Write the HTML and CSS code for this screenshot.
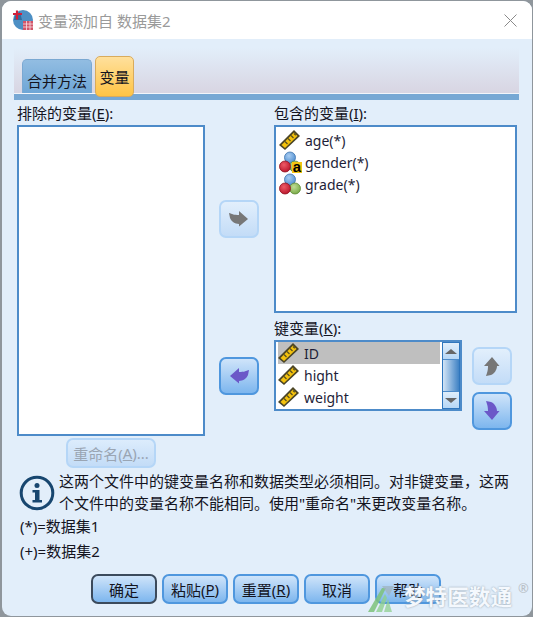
FILE: index.html
```html
<!DOCTYPE html>
<html lang="zh-CN">
<head>
<meta charset="utf-8">
<title>变量添加自 数据集2</title>
<link rel="stylesheet" href="styles.css">
</head>
<body>
<svg class="defs" width="0" height="0" aria-hidden="true">
  <defs>
    <radialGradient id="gb" cx=".4" cy=".35" r=".7"><stop offset="0" stop-color="#a9cdf2"/><stop offset="1" stop-color="#4f8ed0"/></radialGradient>
    <radialGradient id="gr" cx=".4" cy=".35" r=".7"><stop offset="0" stop-color="#ee5a66"/><stop offset="1" stop-color="#b8142a"/></radialGradient>
    <radialGradient id="gg" cx=".4" cy=".35" r=".7"><stop offset="0" stop-color="#bfdc94"/><stop offset="1" stop-color="#76a844"/></radialGradient>
  </defs>
  <symbol id="ruler" viewBox="0 0 22 20">
    <path d="M0 15 15 0l6 6L6 20z" fill="#4a4426"/>
    <path d="M2.500 15 15 2.500 18.500 6 6 18z" fill="#f4c20d"/>
    <path d="M6 11.500l2.500 2.500M9 8.500l2.500 2.500M12 5.500l2.500 2.500M15 3.500l1.800 1.800" stroke="#5c5220" stroke-width="1.300"/>
  </symbol>
  <symbol id="balls" viewBox="0 0 22 22">
    <circle cx="11" cy="6.500" r="5.500" fill="url(#gb)" stroke="#3f74ad" stroke-width=".8"/>
    <circle cx="16" cy="15.500" r="5.500" fill="url(#gg)" stroke="#5f8a38" stroke-width=".8"/>
    <circle cx="6" cy="15.500" r="5.500" fill="url(#gr)" stroke="#8f1422" stroke-width=".8"/>
  </symbol>
  <symbol id="arrow" viewBox="0 0 20 16">
    <path d="M0 2c3 1 5 2 10 2V0l9 8-9 7.500V13C6 13 2 10 1 7z" fill="currentColor"/>
  </symbol>
</svg>
<div class="dialog">
  <header class="titlebar">
    <svg class="app-icon" viewBox="0 0 22 22" width="22" height="22" aria-hidden="true">
      <circle cx="11" cy="11" r="10" fill="#4d8fc4"/>
      <path d="M2 11a9 9 0 0 1 6-8l2 8z" fill="#2f6d9f"/>
      <path d="M5 1.500v9M1 5h9" stroke="#cf1f3a" stroke-width="2.200"/>
      <rect x="11" y="12" width="10" height="9" fill="#d25468"/>
      <path d="M11 15h10M11 18h10M14.500 12v9M18 12v9" stroke="#f6dfe3" stroke-width=".8"/>
    </svg>
    <h1 class="title">变量添加自 数据集2</h1>
    <svg class="close" viewBox="0 0 13 13" width="13" height="13" aria-hidden="true">
      <path d="M.5.500l12 12M12.500.500l-12 12" stroke="#8a8a8a" stroke-width="1"/>
    </svg>
  </header>
  <div class="content">
    <nav class="tabstrip">
      <span class="tab">合并方法</span>
      <span class="tab tab-active">变量</span>
    </nav>
    <div class="tabline"></div>
    <main class="columns">
      <section class="col-left">
        <div class="label">排除的变量(<u>E</u>):</div>
        <div class="listbox listbox-excluded"></div>
        <button class="btn btn-rename" disabled>重命名(<u>A</u>)...</button>
      </section>
      <section class="col-mid">
        <button class="btn square square-disabled arrow-top"><svg class="ico" width="20" height="16"><use href="#arrow"/></svg></button>
        <button class="btn square arrow-low"><svg class="ico ico-flip" width="20" height="16"><use href="#arrow"/></svg></button>
      </section>
      <section class="col-right">
        <div class="label">包含的变量(<u>I</u>):</div>
        <ul class="listbox listbox-included">
          <li class="item"><svg class="var-icon" width="22" height="20"><use href="#ruler"/></svg>age(*)</li>
          <li class="item"><span class="nominal"><svg class="var-icon" width="22" height="22"><use href="#balls"/></svg><b class="letter-a">a</b></span>gender(*)</li>
          <li class="item"><svg class="var-icon" width="22" height="22"><use href="#balls"/></svg>grade(*)</li>
        </ul>
        <div class="label label-key">键变量(<u>K</u>):</div>
        <div class="key-row">
          <div class="keybox">
            <ul class="keylist">
              <li class="item item-selected"><svg class="var-icon" width="22" height="20"><use href="#ruler"/></svg>ID</li>
              <li class="item"><svg class="var-icon" width="22" height="20"><use href="#ruler"/></svg>hight</li>
              <li class="item"><svg class="var-icon" width="22" height="20"><use href="#ruler"/></svg>weight</li>
            </ul>
            <div class="scrollbar">
              <span class="sb-btn"><i class="tri tri-up"></i></span>
              <span class="sb-thumb"></span>
              <span class="sb-btn"><i class="tri tri-down"></i></span>
            </div>
          </div>
          <div class="updown">
            <button class="btn square square-disabled"><svg class="ico ico-up" width="20" height="16"><use href="#arrow"/></svg></button>
            <button class="btn square"><svg class="ico ico-down" width="20" height="16"><use href="#arrow"/></svg></button>
          </div>
        </div>
      </section>
    </main>
    <section class="note">
      <svg class="info" viewBox="0 0 36 36" width="36" height="36" aria-hidden="true">
        <circle cx="18" cy="18" r="15.800" fill="none" stroke="#17466f" stroke-width="3"/>
        <circle cx="18" cy="10.500" r="2.500" fill="#17466f"/>
        <path d="M13.500 15h7v10h2.500v2.500H13.500V25H16v-7.500h-2.500z" fill="#17466f"/>
      </svg>
      <p class="note-text">这两个文件中的键变量名称和数据类型必须相同。对非键变量，这两个文件中的变量名称不能相同。使用"重命名"来更改变量名称。</p>
    </section>
    <p class="legend">(*)=数据集1</p>
    <p class="legend legend-2">(+)=数据集2</p>
    <footer class="actions">
      <button class="btn act act-default">确定</button>
      <button class="btn act">粘贴(<u>P</u>)</button>
      <button class="btn act">重置(<u>R</u>)</button>
      <button class="btn act">取消</button>
      <button class="btn act">帮助</button>
    </footer>
  </div>
  <div class="watermark">
    <svg class="wm-logo" viewBox="0 0 30 30" width="30" height="30" aria-hidden="true">
      <path d="M0 28 14 4l4 0L6 28z" fill="#7cc27a" opacity=".85"/>
      <path d="M8 28 17 10l2 4-5 14z" fill="#8fcf8f" opacity=".8"/>
      <path d="M16 28l4-13 4 13z" fill="#8fcf8f" opacity=".75"/>
      <path d="M14 2h12l-5 10z" fill="#9fb3bf" opacity=".75"/>
    </svg>
    <span class="wm-text">梦特医数通</span>
    <sup class="wm-reg">®</sup>
  </div>
</div>
</body>
</html>
```
FILE: styles.css
```css
* { box-sizing: border-box; }
html, body { margin: 0; padding: 0; }
body {
  width: 533px;
  height: 617px;
  overflow: hidden;
  background: #8f969c;
  font-family: "Noto Sans", "Noto Sans CJK SC", sans-serif;
  font-size: 15px;
  color: #14141e;
}
.defs { position: absolute; }
.dialog {
  position: relative;
  margin: 1px 0 0 2px;
  width: 530px;
  height: 615px;
  border-radius: 9px;
  overflow: hidden;
  background: #e2eefa;
}
.titlebar {
  height: 38px;
  background: #fff;
  display: flex;
  align-items: center;
  padding: 0 9px 0 10px;
}
.app-icon { flex: none; }
.title {
  margin: 0 0 0 4px;
  flex: 1;
  font-size: 15px;
  font-weight: 400;
  color: #9a9a9a;
}
.close { flex: none; margin-right: 6px; }
.content { padding: 0 0 0 15px; }
.tabstrip {
  margin: 9px 13px 0 -3px;
  padding: 8px 0 0 8px;
  height: 46px;
  display: flex;
  align-items: flex-end;
  gap: 3px;
  background: linear-gradient(#e2eefa, #d8d5e2);
  border-bottom: 1px solid #f2f5fa;
}
.tab {
  height: 34px;
  width: 70px;
  padding-top: 10px;
  text-align: center;
  background: linear-gradient(#92bde2, #6ea6d6);
  border: 1px solid #7aa8d2;
  border-bottom: 0;
  border-radius: 5px 5px 0 0;
}
.tab-active {
  width: 39px;
  height: 41px;
  margin-bottom: -4px;
  padding-top: 9px;
  background: linear-gradient(#ffe09c, #ffc445);
  border: 1px solid #d9ab5c;
  border-radius: 5px;
  position: relative;
}
.tabline {
  margin: 0 13px 0 -3px;
  height: 6px;
  background: #77a8d4;
}
.columns {
  display: grid;
  grid-template-columns: 188px 69px 243px;
  height: 368px;
}
.label { height: 25px; padding-top: 3px; line-height: 20px; white-space: nowrap; }
.listbox {
  margin: 0;
  padding: 2px 0 0 3px;
  list-style: none;
  background: #fff;
  border: 2px solid #4d8bc9;
}
.listbox-excluded { height: 311px; }
.listbox-included { height: 188px; }
.label-key { height: 27px; padding-top: 5px; margin-top: 0; }
.item {
  height: 22px;
  display: flex;
  align-items: center;
  gap: 4px;
  font-size: 14px;
  color: #1e1e38;
  white-space: nowrap;
}
.var-icon { flex: none; display: block; }
.nominal { position: relative; display: block; height: 22px; }
.letter-a {
  position: absolute;
  right: -1px;
  bottom: 0;
  width: 10px;
  height: 11px;
  background: #f3c511;
  font: 700 15px/9px "Liberation Sans", sans-serif;
  color: #000;
  text-align: center;
}
.col-mid { display: flex; flex-direction: column; padding: 100px 0 0 14px; }
.arrow-low { margin-top: 119px; }
.btn {
  font: inherit;
  color: #14141e;
  padding: 0;
  border: 2px solid #4f97de;
  border-radius: 7px;
  background: linear-gradient(#cfe4fa, #7db6ee);
  display: flex;
  align-items: center;
  justify-content: center;
}
.btn-rename {
  margin: 2px 0 0 49px;
  width: 90px;
  height: 30px;
  color: #9aa5b3;
  border-color: #b5d6f7;
  background: linear-gradient(#dcecfc, #c3dcf7);
}
.square { width: 40px; height: 38px; color: #6b58c8; }
.square-disabled {
  color: #777;
  border-color: #b5d6f7;
  background: linear-gradient(#e2effc, #c3dcf7);
}
.ico { display: block; }
.ico-flip { transform: scaleX(-1); }
.ico-up { transform: rotate(-90deg); }
.ico-down { transform: rotate(90deg) scaleY(-1); }
.key-row { display: flex; }
.keybox {
  width: 188px;
  height: 71px;
  display: flex;
  background: #fff;
  border: 2px solid #4d8bc9;
}
.keylist {
  flex: 1;
  margin: 0;
  padding: 0 2px;
  list-style: none;
}
.item-selected { background: #bfbfbf; }
.scrollbar {
  width: 18px;
  display: flex;
  flex-direction: column;
  border: 1px solid #2f76bd;
  background: #d9e9f9;
}
.sb-btn {
  height: 16px;
  display: flex;
  align-items: center;
  justify-content: center;
  background: linear-gradient(#e0eefb, #b6d7f6);
}
.sb-thumb {
  flex: 1;
  background: linear-gradient(90deg, #d2e4f6, #3f82c4);
  border-top: 1px solid #4d8bc9;
  border-bottom: 1px solid #4d8bc9;
}
.tri { width: 0; height: 0; border-left: 6px solid transparent; border-right: 6px solid transparent; }
.tri-up { border-bottom: 5px solid #666; }
.tri-down { border-top: 5px solid #666; }
.updown { margin: 7px 0 0 10px; display: flex; flex-direction: column; gap: 7px; }
.note { display: flex; align-items: flex-start; height: 45px; padding-top: 2px; margin-left: 2px; }
.info { flex: none; margin-top: 5px; }
.note-text { margin: 0 0 0 4px; width: 456px; line-height: 22px; }
.legend { margin: 4px 0 0 3px; height: 19px; line-height: 19px; }
.legend-2 { margin-top: 6px; }
.actions { display: flex; gap: 5px; margin: 13px 0 0 74px; }
.act { width: 66px; height: 30px; }
.act-default { border-color: #3b4a5c; }
.watermark {
  position: absolute;
  left: 366px;
  bottom: 2px;
  display: flex;
  align-items: flex-end;
  color: #fff;
}
.wm-logo { display: block; }
.wm-text {
  margin-left: 6px;
  margin-bottom: 4px;
  font-size: 21.600px;
  line-height: 27px;
  font-weight: 700;
  color: #f4f8fd;
  text-shadow: 0 0 2px #8a9aa8;
}
.wm-reg { font-size: 13px; line-height: 13px; margin: 0 0 19px 6px; color: #b9c0c6; }
```
